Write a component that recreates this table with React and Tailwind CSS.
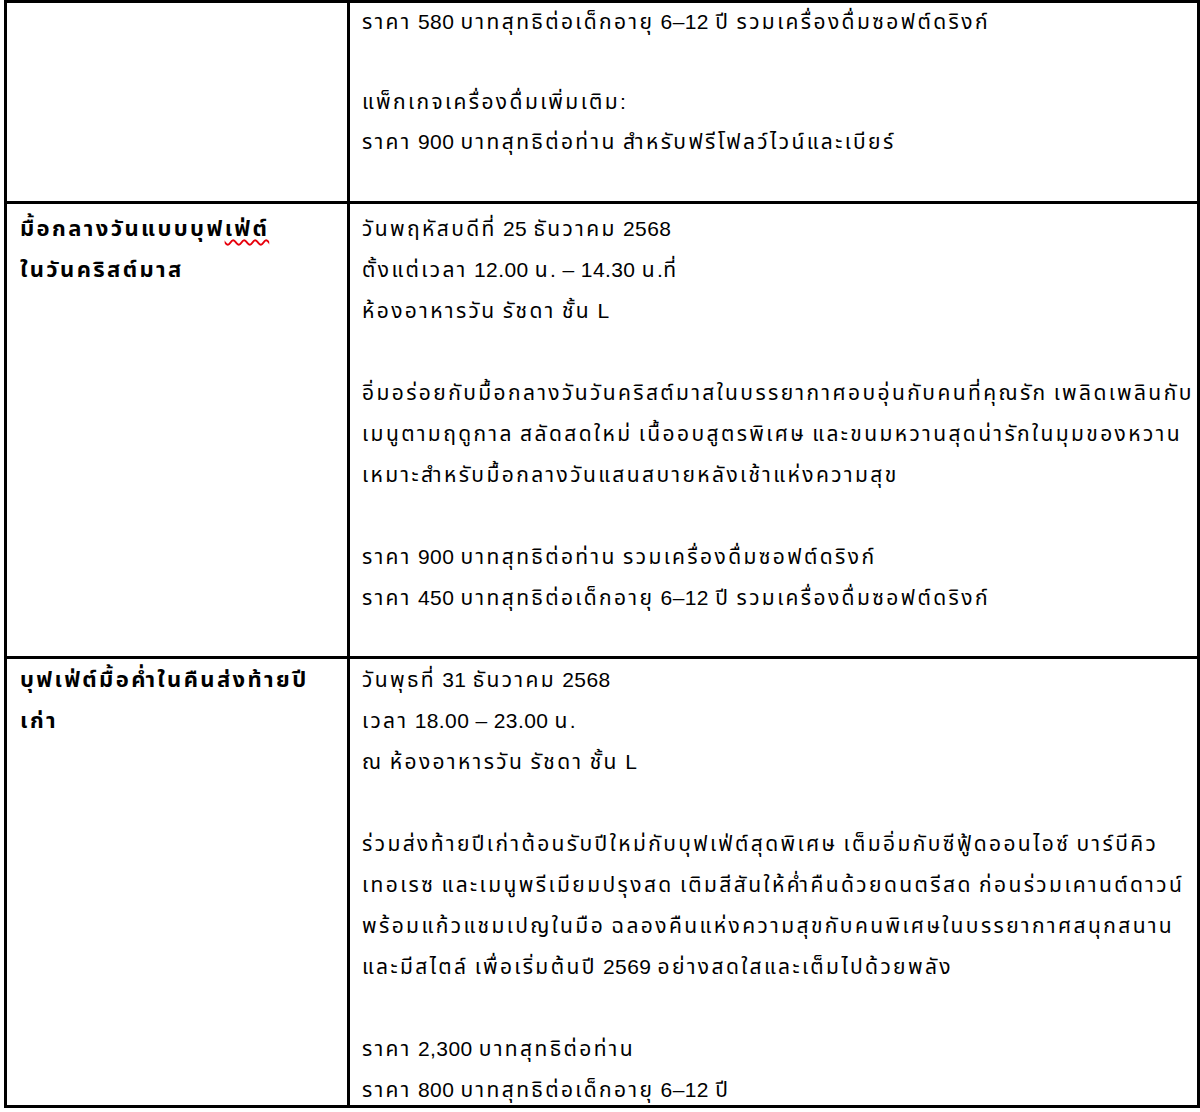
// Thai runs get wider tracking than digits/latin so the line widths match the document font
function Spaced({ text }) {
  return text.split(/([\u0E00-\u0E7F]+)/).map((part, i) =>
    /[\u0E00-\u0E7F]/.test(part)
      ? <span key={i} className="tracking-[2.4px]">{part}</span>
      : <span key={i} className="tracking-[0.4px]">{part}</span>
  )
}

const Line = ({ children }) => (
  <div className="h-[41px] leading-[41px] whitespace-nowrap">{children}</div>
)

const R = ({ t, h = 'h-[41px] leading-[41px]' }) => (
  <div className={`${h} whitespace-nowrap`}><Spaced text={t} /></div>
)

const Blank = () => <div className="h-[41px]" />

function Row({ left, right, h, pt }) {
  return (
    <div className={`flex border-b-[3px] border-black ${h}`}>
      <div
        className={`w-[343px] shrink-0 border-r-[3px] border-black pl-[13px] font-bold text-[22px] tracking-[2.4px] ${pt}`}
      >
        {left}
      </div>
      <div className={`flex-1 pl-[12px] ${pt}`}>{right}</div>
    </div>
  )
}

export default function App() {
  return (
    <div className="bg-white w-[1200px] h-[1112px] overflow-hidden">
      <div
        className="ml-[4px] w-[1196px] border-x-[3px] border-t-[3px] border-black text-black text-[21px]"
        style={{ fontFamily: '"Liberation Sans", "Noto Sans Thai", "Noto Sans", "DejaVu Sans", sans-serif' }}
      >
        {/* row 1 (continued from previous page) */}
        <div className="flex border-b-[3px] border-black h-[201px]">
          <div className="w-[343px] shrink-0 border-r-[3px] border-black" />
          <div className="flex-1 pl-[12px] -mt-[1px]">
            <R h="h-[40px] leading-[40px]" t="ราคา 580 บาทสุทธิต่อเด็กอายุ 6–12 ปี รวมเครื่องดื่มซอฟต์ดริงก์" />
            <div className="h-[40px]" />
            <R h="h-[40px] leading-[40px]" t="แพ็กเกจเครื่องดื่มเพิ่มเติม:" />
            <R h="h-[40px] leading-[40px]" t="ราคา 900 บาทสุทธิต่อท่าน สำหรับฟรีโฟลว์ไวน์และเบียร์" />
          </div>
        </div>

        <Row
          h="h-[455px]"
          pt="pt-[4px]"
          left={
            <>
              <Line>
                มื้อกลางวันแบบบุฟ
                <span className="underline decoration-wavy decoration-red-600 decoration-[1.5px] underline-offset-[3px]">
                  เฟ่ต์
                </span>
              </Line>
              <Line>ในวันคริสต์มาส</Line>
            </>
          }
          right={
            <>
              <R t="วันพฤหัสบดีที่ 25 ธันวาคม 2568" />
              <R t="ตั้งแต่เวลา 12.00 น. – 14.30 น.ที่" />
              <R t="ห้องอาหารวัน รัชดา ชั้น L" />
              <Blank />
              <R t="อิ่มอร่อยกับมื้อกลางวันวันคริสต์มาสในบรรยากาศอบอุ่นกับคนที่คุณรัก เพลิดเพลินกับ" />
              <R t="เมนูตามฤดูกาล สลัดสดใหม่ เนื้ออบสูตรพิเศษ และขนมหวานสุดน่ารักในมุมของหวาน" />
              <R t="เหมาะสำหรับมื้อกลางวันแสนสบายหลังเช้าแห่งความสุข" />
              <Blank />
              <R t="ราคา 900 บาทสุทธิต่อท่าน รวมเครื่องดื่มซอฟต์ดริงก์" />
              <R t="ราคา 450 บาทสุทธิต่อเด็กอายุ 6–12 ปี รวมเครื่องดื่มซอฟต์ดริงก์" />
            </>
          }
        />

        <Row
          h="h-[449px]"
          pt="pt-0"
          left={
            <>
              <Line>บุฟเฟ่ต์มื้อค่ำในคืนส่งท้ายปี</Line>
              <Line>เก่า</Line>
            </>
          }
          right={
            <>
              <R t="วันพุธที่ 31 ธันวาคม 2568" />
              <R t="เวลา 18.00 – 23.00 น." />
              <R t="ณ ห้องอาหารวัน รัชดา ชั้น L" />
              <Blank />
              <R t="ร่วมส่งท้ายปีเก่าต้อนรับปีใหม่กับบุฟเฟ่ต์สุดพิเศษ เต็มอิ่มกับซีฟู้ดออนไอซ์ บาร์บีคิว" />
              <R t="เทอเรซ และเมนูพรีเมียมปรุงสด เติมสีสันให้ค่ำคืนด้วยดนตรีสด ก่อนร่วมเคานต์ดาวน์" />
              <R t="พร้อมแก้วแชมเปญในมือ ฉลองคืนแห่งความสุขกับคนพิเศษในบรรยากาศสนุกสนาน" />
              <R t="และมีสไตล์ เพื่อเริ่มต้นปี 2569 อย่างสดใสและเต็มไปด้วยพลัง" />
              <Blank />
              <R t="ราคา 2,300 บาทสุทธิต่อท่าน" />
              <R t="ราคา 800 บาทสุทธิต่อเด็กอายุ 6–12 ปี" />
            </>
          }
        />
      </div>
    </div>
  )
}
